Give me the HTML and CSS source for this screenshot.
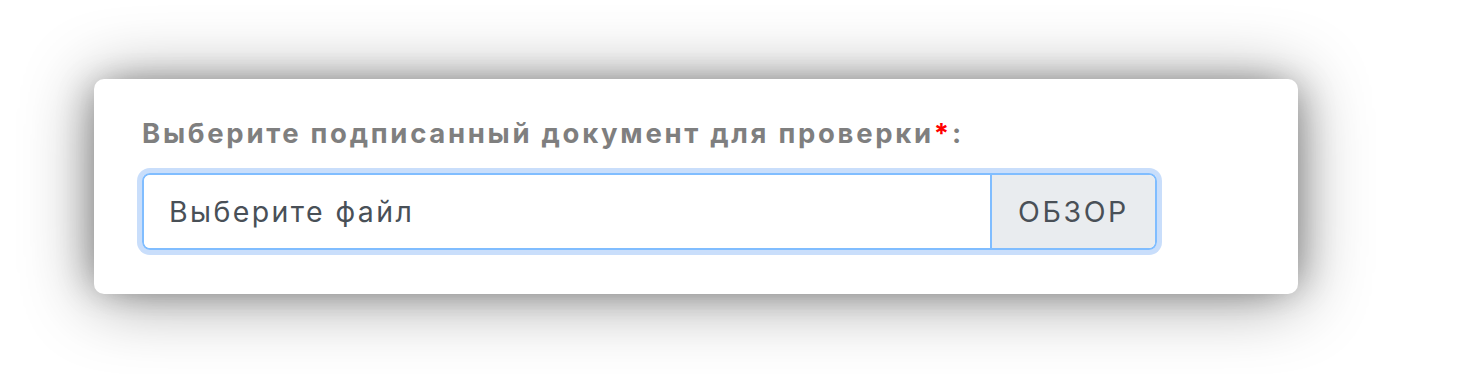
FILE: index.html
```html
<!DOCTYPE html>
<html lang="ru">
<head>
<meta charset="utf-8">
<title>Проверка подписи</title>
<link rel="stylesheet" href="styles.css">
</head>
<body>
<div class="page">
  <div class="card">
    <label class="field-label" for="file">Выберите подписанный документ для проверки<span class="req">*</span>:</label>
    <div class="file-group">
      <div class="file-name" id="file">Выберите файл</div>
      <div class="file-browse">ОБЗОР</div>
    </div>
  </div>
</div>
</body>
</html>
```

FILE: styles.css
```css
html, body {
  margin: 0;
  padding: 0;
  background: #ffffff;
}
body {
  font-family: Inter, "Noto Sans", "Liberation Sans", sans-serif;
}
.page {
  box-sizing: border-box;
  min-height: 374px;
  padding: 79px 0 80px 94px;
}
.card {
  box-sizing: border-box;
  width: 1204px;
  height: 215px;
  background: #ffffff;
  border-radius: 10px;
  box-shadow:
    0 4px 70px rgba(0, 0, 0, 0.42),
    -12px 0 34px -8px rgba(0, 0, 0, 0.22),
    12px 0 34px -8px rgba(0, 0, 0, 0.22);
  padding: 35px 48px 0 48px;
}
.field-label {
  display: block;
  font-size: 27.5px;
  line-height: 39px;
  font-weight: 700;
  letter-spacing: 2.7px;
  color: #7f7f7f;
  margin-bottom: 20px;
}
.req {
  color: #ff0000;
}
.file-group {
  display: flex;
  width: 1015px;
  height: 77px;
  box-sizing: border-box;
  border: 2px solid #80bdff;
  border-radius: 8px;
  box-shadow: 0 0 0 5px #c9defb;
  overflow: hidden;
}
.file-name {
  flex: 1;
  display: flex;
  align-items: center;
  padding: 0 24px 0 25px;
  font-size: 28.5px;
  letter-spacing: 2.4px;
  color: #495057;
  background: #ffffff;
}
.file-browse {
  display: flex;
  align-items: center;
  justify-content: center;
  width: 163px;
  border-left: 2px solid #80bdff;
  background: #e9ecef;
  font-size: 28.5px;
  letter-spacing: 2.6px;
  color: #495057;
}
```
